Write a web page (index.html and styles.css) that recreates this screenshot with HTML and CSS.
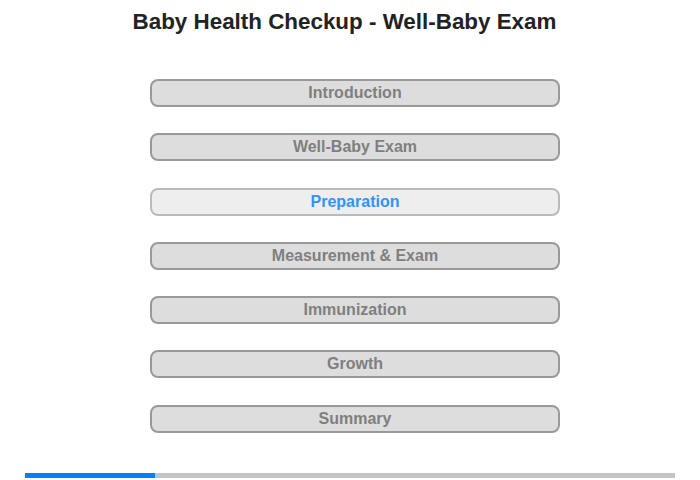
FILE: index.html
```html
<!DOCTYPE html>
<html lang="en">
<head>
    <meta charset="UTF-8">
    <meta name="viewport" content="width=device-width, initial-scale=1.0">
    <title>Baby Health Checkup - Well-Baby Exam</title>
    <link rel="stylesheet" href="styles.css">
</head>
<body>
    <div class="page">
        <h1>Baby Health Checkup - Well-Baby Exam</h1>
        <div class="menu">
            <button class="item">Introduction</button>
            <button class="item">Well-Baby Exam</button>
            <button class="item active">Preparation</button>
            <button class="item">Measurement &amp; Exam</button>
            <button class="item">Immunization</button>
            <button class="item">Growth</button>
            <button class="item">Summary</button>
        </div>
        <div class="progress">
            <div class="progress-fill" style="width: 20%;"></div>
        </div>
    </div>
</body>
</html>
```

FILE: styles.css
```css
body {
    font-family: "Liberation Sans", Arial, sans-serif;
    margin: 0;
    background-color: #ffffff;
    color: #222222;
}
.page {
    width: 700px;
    height: 480px;
    display: flex;
    flex-direction: column;
    align-items: center;
}
h1 {
    font-size: 22.4px;
    font-weight: bold;
    margin: 9px 0 0 -11px;
    line-height: 26px;
}
.menu {
    display: flex;
    flex-direction: column;
    gap: 26.3px;
    width: 410px;
    margin: 44px 0 0 10px;
}
.item {
    height: 28px;
    padding: 0;
    font-family: inherit;
    font-size: 16px;
    font-weight: bold;
    color: #7f7f7f;
    background-color: #dddddd;
    border: 2px solid #999999;
    border-radius: 8px;
    cursor: pointer;
}
.item.active {
    color: #3392ff;
    background-color: #eeeeee;
    border-color: #bbbbbb;
}
.progress {
    width: 650px;
    height: 5px;
    margin-top: 40px;
    background-color: #c4c4c4;
}
.progress-fill {
    height: 100%;
    background-color: #0080ff;
}
```
